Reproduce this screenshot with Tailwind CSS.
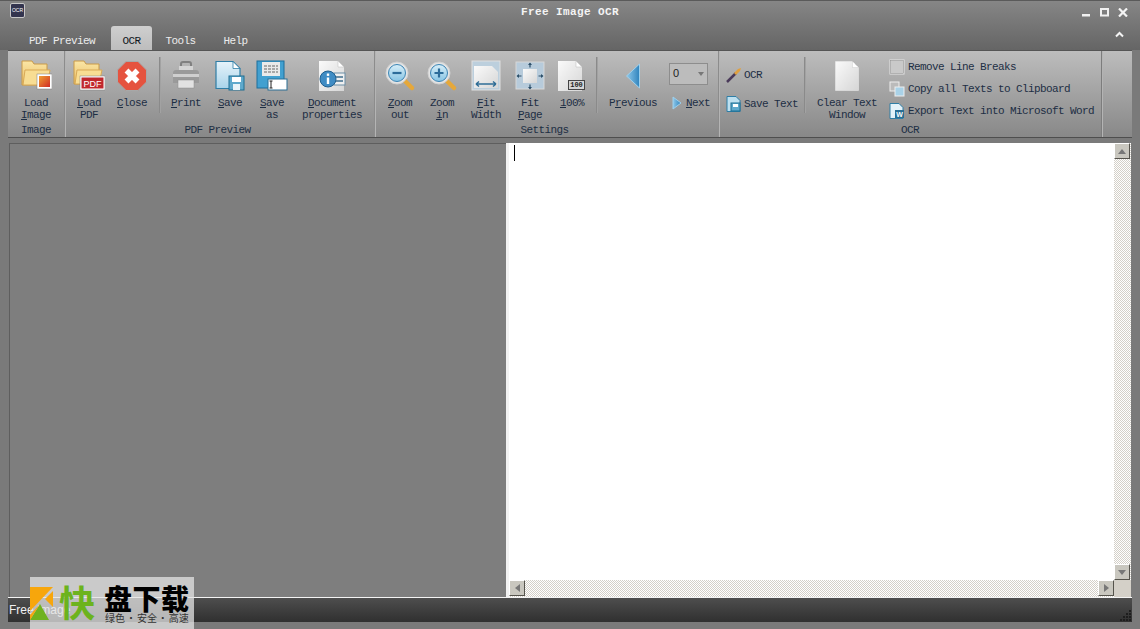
<!DOCTYPE html>
<html>
<head>
<meta charset="utf-8">
<script src="https://cdn.jsdelivr.net/npm/@tailwindcss/browser@4"></script>
</head>
<body class="m-0 overflow-hidden">
<svg class="absolute w-0 h-0">
  <defs>
    <linearGradient id="folder" x1="0" y1="0" x2="0" y2="1"><stop offset="0" stop-color="#fbe6a6"/><stop offset="1" stop-color="#e9bd62"/></linearGradient>
    <linearGradient id="page" x1="0" y1="0" x2="1" y2="1"><stop offset="0" stop-color="#fafafa"/><stop offset="1" stop-color="#d6d6d6"/></linearGradient>
    <linearGradient id="bluepage" x1="0" y1="0" x2="0" y2="1"><stop offset="0" stop-color="#e6f3fa"/><stop offset="1" stop-color="#a9d4ea"/></linearGradient>
    <linearGradient id="lens" x1="0" y1="0" x2="0" y2="1"><stop offset="0" stop-color="#d8eef8"/><stop offset="1" stop-color="#86c4e4"/></linearGradient>
    <linearGradient id="tri" x1="0" y1="0" x2="1" y2="0"><stop offset="0" stop-color="#8ec8ea"/><stop offset="1" stop-color="#2f83bd"/></linearGradient>
    <linearGradient id="orangered" x1="0" y1="0" x2="1" y2="1"><stop offset="0" stop-color="#f0a030"/><stop offset="1" stop-color="#cf2a25"/></linearGradient>
  </defs>
</svg>

<div class="relative w-[1140px] h-[629px] flex flex-col overflow-hidden bg-[#7a7a7a] font-['Liberation_Mono',monospace] text-[11px] leading-[12px] tracking-[-0.6px]">
  <!-- title + tabs -->
  <div class="h-[50px] shrink-0 flex flex-col bg-gradient-to-b from-[#868686] to-[#656565] border-t border-[#5a5a5a]">
    <div class="h-[25px] shrink-0 flex items-start relative">
      <div class="ml-[10px] mt-[2px] w-[15px] h-[15px] rounded-[2px] bg-[#33344e] border border-[#c8c8c8] flex items-center justify-center text-[5px] leading-[5px] tracking-[0px] text-white font-['Liberation_Sans',sans-serif]">OCR</div>
      <div class="flex-1 text-center pt-[5px] pl-[33px] font-bold text-[#f4f4f4] tracking-[0.4px]">Free Image OCR</div>
      <div class="flex items-start gap-[9px] pt-[7px] pr-[12px]">
        <svg width="9" height="9" viewBox="0 0 9 9"><rect x="0" y="6" width="8" height="2.5" fill="#f0f0f0"/></svg>
        <svg width="9" height="9" viewBox="0 0 9 9"><rect x="1" y="1" width="7" height="6.5" fill="none" stroke="#f0f0f0" stroke-width="2"/></svg>
        <svg width="10" height="9" viewBox="0 0 10 9"><path d="M1 0.5 L9 8.5 M9 0.5 L1 8.5" stroke="#f4f4f4" stroke-width="2.2"/></svg>
      </div>
    </div>
    <div class="h-[24px] flex items-end pl-[8px] relative text-[#ececec]">
      <div class="w-[103px] h-[24px] pl-[21px] pt-[9px]">PDF Preview</div>
      <div class="w-[41px] h-[24px] rounded-t-[3px] bg-gradient-to-b from-[#cfcfcf] to-[#bdbdbd] text-[#101820] text-center pt-[9px]">OCR</div>
      <div class="w-[57px] h-[24px] text-center pt-[9px]">Tools</div>
      <div class="w-[57px] h-[24px] -ml-[2px] text-center pt-[9px]">Help</div>
      <svg class="absolute right-[16px] top-[5px]" width="9" height="7" viewBox="0 0 9 7"><path d="M1 5.5 L4.5 2 L8 5.5" fill="none" stroke="#f4f4f4" stroke-width="2"/></svg>
    </div>
  </div>

  <!-- ribbon -->
  <div class="ml-[8px] mr-[8px] h-[88px] shrink-0 flex bg-gradient-to-b from-[#bdbdbd] to-[#888888] border-t border-[#555] border-b border-b-[#4e4e4e] text-[#1d2e44]">
    <!-- Image -->
    <div class="w-[57px] shrink-0 flex flex-col border-r border-[#8c8c8c] shadow-[1px_0_0_#b4b4b4]">
      <div class="h-[73px] flex">
        <div class="w-full flex flex-col items-center pt-[9px]">
          <svg width="32" height="32" viewBox="0 2 32 32">
            <path d="M2 3 h10 l2 3 h13 v21 h-25 z" fill="url(#folder)" stroke="#c99a48"/>
            <path d="M3 27 l2 -15 h25 l-3 15 z" fill="#f8dd93" stroke="#d8a957"/>
            <rect x="17" y="16" width="15" height="15" fill="#fff" stroke="#7d7d7d" stroke-width=".5"/>
            <rect x="19" y="18" width="11" height="11" fill="url(#orangered)"/>
          </svg>
          <div class="mt-[5px] text-center">Load<br><span class="underline">I</span>mage</div>
        </div>
      </div>
      <div class="h-[12px] text-center">Image</div>
    </div>
    <!-- PDF Preview -->
    <div class="w-[310px] shrink-0 flex flex-col border-r border-[#8c8c8c] shadow-[1px_0_0_#b4b4b4]">
      <div class="h-[73px] flex pl-[3px]">
        <div class="w-[42px] flex flex-col items-center pt-[9px]">
          <svg width="32" height="32" viewBox="0 2 32 32">
            <path d="M1 3 h10 l2 3 h13 v20 h-25 z" fill="url(#folder)" stroke="#c99a48"/>
            <path d="M2 26 l2 -14 h25 l-3 14 z" fill="#f8dd93" stroke="#d8a957"/>
            <rect x="7" y="18" width="25" height="14" fill="#fff" stroke="#7d7d7d" stroke-width=".5"/>
            <rect x="8.500" y="19.500" width="22" height="11" fill="#c0272d"/>
            <text x="19.500" y="28.500" text-anchor="middle" font-family="Liberation Sans" font-size="9" letter-spacing="0" fill="#fff">PDF</text>
          </svg>
          <div class="mt-[5px] text-center"><span class="underline">L</span>oad<br>PDF</div>
        </div>
        <div class="w-[44px] flex flex-col items-center pt-[9px]">
          <svg width="32" height="32" viewBox="0 0 32 32">
            <path d="M10 1.500 h12 l8.500 8.500 v12 l-8.500 8.500 h-12 l-8.500 -8.500 v-12 z" fill="#e5533f" stroke="#a8a8a8"/>
            <path d="M10.500 10.500 L21.500 21.500 M21.500 10.500 L10.500 21.500" stroke="#fff" stroke-width="5.500"/>
          </svg>
          <div class="mt-[5px] text-center"><span class="underline">C</span>lose</div>
        </div>
        <div class="w-[11px] flex justify-center pt-[6px]"><div class="w-[2px] h-[56px] bg-[#a2a2a2] border-l border-[#8a8a8a]"></div></div>
        <div class="w-[42px] flex flex-col items-center pt-[9px]">
          <svg width="32" height="32" viewBox="0 0 32 32">
            <path d="M11 10 v-6 q0 -2 2 -2 h6 q2 0 2 2 v6" fill="none" stroke="#808080" stroke-width="2"/>
            <rect x="9" y="6" width="14" height="6" fill="#d4d4d4"/>
            <path d="M3 13 q0 -3 3 -3 h20 q3 0 3 3 v10 h-26 z" fill="#9a9a9a"/>
            <rect x="3" y="14" width="26" height="3" fill="#cfcfcf"/>
            <rect x="8" y="20" width="16" height="8" fill="#e2e2e2" stroke="#8c8c8c" stroke-width=".5"/>
          </svg>
          <div class="mt-[5px] text-center"><span class="underline">P</span>rint</div>
        </div>
        <div class="w-[46px] flex flex-col items-center pt-[9px]">
          <svg width="32" height="32" viewBox="0 0 32 32">
            <path d="M2 1.500 h17 l7 7 v20 h-24 z" fill="url(#bluepage)" stroke="#2f7ea6" stroke-width="1.200"/>
            <path d="M19 1.500 v7 h7 z" fill="#fff" stroke="#2f7ea6" stroke-width=".8"/>
            <rect x="15" y="16" width="15" height="14" fill="#5fa9cc" stroke="#1f6e92"/>
            <rect x="18" y="17" width="9" height="5" fill="#fff"/>
            <rect x="19" y="24" width="7" height="6" fill="#e8f3f8"/>
          </svg>
          <div class="mt-[5px] text-center"><span class="underline">S</span>ave</div>
        </div>
        <div class="w-[38px] flex flex-col items-center pt-[9px]">
          <svg width="32" height="32" viewBox="0 0 32 32">
            <rect x="1" y="1" width="27" height="27" fill="#42a0d0" stroke="#1c6f9c"/>
            <rect x="6" y="2" width="18" height="14" fill="#eaeaea"/>
            <path d="M8 6 h14 M8 9 h14 M8 12 h14" stroke="#666" stroke-dasharray="3 1"/>
            <rect x="12" y="19" width="19" height="11" fill="#fff" stroke="#2a6f95"/>
            <path d="M15 21 v7 M13.500 21 h3 M13.500 28 h3" stroke="#222" fill="none"/>
          </svg>
          <div class="mt-[5px] text-center"><span class="underline">S</span>ave<br>as</div>
        </div>
        <div class="w-[82px] flex flex-col items-center pt-[9px]">
          <svg width="32" height="32" viewBox="0 0 32 32">
            <path d="M3 1 h19 l6 6 v24 h-25 z" fill="url(#page)"/>
            <path d="M22 1 v6 h6 z" fill="#fff" stroke="#bbb" stroke-width=".5"/>
            <rect x="18" y="13" width="11" height="12" fill="#f0f0f0" stroke="#6a8ea6"/>
            <path d="M20 17 h7 M20 21 h7" stroke="#6a8ea6" stroke-width="2"/>
            <circle cx="12" cy="19" r="8" fill="#3f8cc4" stroke="#1f5f8f"/>
            <rect x="10.800" y="17.500" width="2.400" height="6.500" fill="#fff"/><rect x="10.800" y="13.500" width="2.400" height="2.400" fill="#fff"/>
          </svg>
          <div class="mt-[5px] text-center"><span class="underline">D</span>ocument<br>properties</div>
        </div>
      </div>
      <div class="h-[12px] text-center pr-[4px]">PDF Preview</div>
    </div>
    <!-- Settings -->
    <div class="w-[344px] shrink-0 flex flex-col border-r border-[#8c8c8c] shadow-[1px_0_0_#b4b4b4]">
      <div class="h-[73px] flex pl-[4px]">
        <div class="w-[42px] flex flex-col items-center pt-[9px]">
          <svg width="32" height="32" viewBox="0 0 32 32">
            <path d="M20 20 L28 28" stroke="#e6a83a" stroke-width="4.500" stroke-linecap="round"/>
            <circle cx="13" cy="13" r="11" fill="#e4e4e4" stroke="#d0d0d0"/>
            <circle cx="13" cy="13" r="8.500" fill="url(#lens)" stroke="#3b85b5"/>
            <path d="M8.500 13 h9" stroke="#2c6c9a" stroke-width="2.200"/>
          </svg>
          <div class="mt-[5px] text-center"><span class="underline">Z</span>oom<br>out</div>
        </div>
        <div class="w-[42px] flex flex-col items-center pt-[9px]">
          <svg width="32" height="32" viewBox="0 0 32 32">
            <path d="M20 20 L28 28" stroke="#e6a83a" stroke-width="4.500" stroke-linecap="round"/>
            <circle cx="13" cy="13" r="11" fill="#e4e4e4" stroke="#d0d0d0"/>
            <circle cx="13" cy="13" r="8.500" fill="url(#lens)" stroke="#3b85b5"/>
            <path d="M8.500 13 h9 M13 8.500 v9" stroke="#2c6c9a" stroke-width="2.200"/>
          </svg>
          <div class="mt-[5px] text-center">Zoom<br><span class="underline">i</span>n</div>
        </div>
        <div class="w-[46px] flex flex-col items-center pt-[9px]">
          <svg width="32" height="32" viewBox="0 0 32 32">
            <rect x="2" y="1" width="28" height="29" fill="#bccfdd" stroke="#e0e0e0"/>
            <path d="M4 6 h18 l6 6 v16 h-24 z" fill="url(#page)"/>
            <path d="M6 24 h20 M6 24 l3 -2.500 M6 24 l3 2.500 M26 24 l-3 -2.500 M26 24 l-3 2.500" stroke="#2f6d96" stroke-width="1.500" fill="none"/>
          </svg>
          <div class="mt-[5px] text-center"><span class="underline">F</span>it<br>Width</div>
        </div>
        <div class="w-[42px] flex flex-col items-center pt-[9px]">
          <svg width="32" height="32" viewBox="0 0 32 32">
            <rect x="2" y="2" width="28" height="27" fill="#b7cbdb" stroke="#d8d8d8"/>
            <rect x="9" y="9" width="14" height="14" fill="url(#page)"/>
            <path d="M16 3.500 v4 M16 24.500 v4 M3.500 16 h4 M24.500 16 h4" stroke="#2c4f69" stroke-width="1.200"/>
            <path d="M14 5 h4 l-2 -2.500 z M14 27 h4 l-2 2.500 z M5 14 v4 l-2.500 -2 z M27 14 v4 l2.500 -2 z" fill="#2c4f69"/>
          </svg>
          <div class="mt-[5px] text-center">Fit<br><span class="underline">P</span>age</div>
        </div>
        <div class="w-[42px] flex flex-col items-center pt-[9px]">
          <div class="relative w-[32px] h-[32px] shrink-0">
            <svg width="32" height="32" viewBox="0 0 32 32">
              <path d="M2 1 h18 l6 6 v24 h-24 z" fill="url(#page)"/>
              <path d="M20 1 v6 h6 z" fill="#fff" stroke="#bbb" stroke-width=".5"/>
            </svg>
            <div class="absolute left-[12px] top-[20px] w-[17px] h-[10px] border border-[#444] bg-[#d4d4d4] text-[7px] leading-[8px] tracking-[0px] text-center text-[#222] font-bold">100</div>
          </div>
          <div class="mt-[5px] text-center"><span class="underline">1</span>00%</div>
        </div>
        <div class="w-[8px] flex justify-center pt-[6px]"><div class="w-[2px] h-[56px] bg-[#a2a2a2] border-l border-[#8a8a8a]"></div></div>
        <div class="w-[64px] flex flex-col items-center pt-[9px]">
          <svg width="32" height="32" viewBox="0 0 32 32"><path d="M22.500 4 L9.500 16 L22.500 28 z" fill="url(#tri)" stroke="#9fd0ec"/></svg>
          <div class="mt-[5px] text-center">P<span class="underline">r</span>evious</div>
        </div>
        <div class="w-[50px] flex flex-col pt-[12px] pl-[4px]">
          <div class="relative w-[39px] h-[22px] border border-[#8d8d8d] bg-[#bcbcbc] text-[#222] font-['Liberation_Sans',sans-serif] text-[11px] tracking-[0px] pl-[3px] pt-[3px]">0
            <svg class="absolute right-[3px] top-[8px]" width="6" height="4" viewBox="0 0 6 4"><path d="M0 0 h6 l-3 4 z" fill="#777"/></svg>
          </div>
          <div class="flex items-center mt-[11px] ml-[3px]">
            <svg width="10" height="14" viewBox="0 0 10 14"><path d="M1 1 L9 7 L1 13 z" fill="url(#tri)" stroke="#9fd0ec"/></svg>
            <span class="ml-[4px]"><span class="underline">N</span>ext</span>
          </div>
        </div>
      </div>
      <div class="h-[12px] text-center pr-[4px]">Settings</div>
    </div>
    <!-- OCR -->
    <div class="w-[383px] shrink-0 flex flex-col border-r border-[#7d7d7d] shadow-[1px_0_0_#b4b4b4]">
      <div class="h-[73px] flex">
        <div class="w-[82px] flex flex-col pl-[7px] pt-[16px] gap-[13px]">
          <div class="flex items-center h-[16px]">
            <svg width="16" height="16" viewBox="0 0 16 16"><path d="M1 15 L10 6" stroke="#4a3a5a" stroke-width="2.500"/><path d="M8 6 L12 2 L15 1 L14 4 L10 8 z" fill="#e0a040"/></svg>
            <span class="ml-[2px]">OCR</span>
          </div>
          <div class="flex items-center h-[16px]">
            <svg width="16" height="16" viewBox="0 0 16 16"><path d="M1 .5 h9 l4 4 v11 h-13 z" fill="#bde0f0" stroke="#2f7ea6"/><rect x="5" y="7" width="9" height="8" fill="#5fa9cc" stroke="#1f6e92"/><rect x="7" y="8" width="5" height="3" fill="#fff"/></svg>
            <span class="ml-[2px]">Save Text</span>
          </div>
        </div>
        <div class="w-[8px] flex justify-center pt-[6px]"><div class="w-[2px] h-[56px] bg-[#a2a2a2] border-l border-[#8a8a8a]"></div></div>
        <div class="w-[76px] flex flex-col items-center pt-[9px]">
          <svg width="32" height="32" viewBox="0 0 32 32">
            <path d="M4.500 1.500 h17 l6 6 v23 h-23 z" fill="url(#page)" stroke="#eee" stroke-width=".5"/>
            <path d="M21.500 1.500 v6 h6 z" fill="#fff" stroke="#aaa" stroke-width=".5" stroke-dasharray="1 1"/>
          </svg>
          <div class="mt-[5px] text-center">Clear Text<br>Window</div>
        </div>
        <div class="flex flex-col pl-[4px] pt-[8px] gap-[6px]">
          <div class="flex items-center h-[16px]">
            <svg width="16" height="16" viewBox="0 0 16 16"><rect x="1" y="1" width="14" height="14" fill="#c9c9c9" stroke="#e6e6e6"/><rect x="1.500" y="1.500" width="13" height="13" fill="none" stroke="#8a8a8a" stroke-width=".5"/></svg>
            <span class="ml-[3px]">Remove Line Breaks</span>
          </div>
          <div class="flex items-center h-[16px]">
            <svg width="16" height="16" viewBox="0 0 16 16"><rect x="1" y="1" width="9" height="9" fill="#bbb" stroke="#eee"/><rect x="6" y="6" width="9" height="9" fill="#a9d2e8" stroke="#eee"/></svg>
            <span class="ml-[3px]">Copy all Texts to Clipboard</span>
          </div>
          <div class="flex items-center h-[16px]">
            <svg width="16" height="16" viewBox="0 0 16 16"><path d="M1 .5 h9 l4 4 v11 h-13 z" fill="#e4f2f9" stroke="#2f7ea6"/><rect x="6" y="7" width="9" height="8" fill="#2a6f95"/><text x="10.500" y="14" text-anchor="middle" font-family="Liberation Sans" font-weight="700" font-size="7" letter-spacing="0" fill="#fff">W</text></svg>
            <span class="ml-[3px]">Export Text into Microsoft Word</span>
          </div>
        </div>
      </div>
      <div class="h-[12px] text-center">OCR</div>
    </div>
    <div class="flex-1"></div>
  </div>

  <!-- panes -->
  <div class="mt-[5px] ml-[9px] mr-[9px] flex-1 flex min-h-0 font-['Liberation_Sans',sans-serif]">
    <div class="w-[497px] shrink-0 bg-[#7e7e7e] border-t border-l border-[#5e5e5e]"></div>
    <div class="w-[3px] shrink-0 bg-[#f2f2f2]"></div>
    <div class="flex-1 flex flex-col min-w-0">
      <div class="flex-1 flex min-h-0">
        <div class="flex-1 bg-white pl-[5px] pt-[2px]"><div class="w-[1px] h-[16px] bg-black"></div></div>
        <div class="w-[17px] shrink-0 flex flex-col justify-between bg-[repeating-conic-gradient(#d4d0c8_0_25%,#ffffff_0_50%)] bg-size-[2px_2px]">
          <div class="w-[16px] h-[16px] bg-[#c9c7bf] border-r border-b border-[#55534c] border-t-white border-l-white border-t border-l flex items-center justify-center"><svg width="8" height="5" viewBox="0 0 8 5"><path d="M0 5 L4 0 L8 5 z" fill="#777"/></svg></div>
          <div class="w-[16px] h-[16px] bg-[#c9c7bf] border-r border-b border-[#55534c] border-t-white border-l-white border-t border-l flex items-center justify-center"><svg width="8" height="5" viewBox="0 0 8 5"><path d="M0 0 L4 5 L8 0 z" fill="#777"/></svg></div>
        </div>
      </div>
      <div class="h-[17px] shrink-0 flex">
        <div class="flex-1 flex justify-between bg-[repeating-conic-gradient(#d4d0c8_0_25%,#ffffff_0_50%)] bg-size-[2px_2px]">
          <div class="w-[16px] h-[16px] bg-[#c9c7bf] border-r border-b border-[#55534c] border-t-white border-l-white border-t border-l flex items-center justify-center"><svg width="5" height="8" viewBox="0 0 5 8"><path d="M5 0 L0 4 L5 8 z" fill="#777"/></svg></div>
          <div class="w-[16px] h-[16px] bg-[#c9c7bf] border-r border-b border-[#55534c] border-t-white border-l-white border-t border-l flex items-center justify-center"><svg width="5" height="8" viewBox="0 0 5 8"><path d="M0 0 L5 4 L0 8 z" fill="#777"/></svg></div>
        </div>
        <div class="w-[17px] shrink-0 bg-[#d4d0c8]"></div>
      </div>
    </div>
  </div>

  <!-- status bar -->
  <div class="mx-[8px] mb-[7px] h-[25px] shrink-0 relative border-t border-[#f4f4f4] bg-gradient-to-b from-[#4e4e4e] to-[#303030] font-['Liberation_Sans',sans-serif] text-[12px] tracking-[0px] leading-[24px] text-[#f0f0f0] pl-[1px]">
    Free Image
    <svg class="absolute right-0 bottom-[1px]" width="12" height="12" viewBox="0 0 12 12" fill="#1e1e1e"><rect x="9" y="1" width="2" height="2"/><rect x="6" y="4" width="2" height="2"/><rect x="9" y="4" width="2" height="2"/><rect x="3" y="7" width="2" height="2"/><rect x="6" y="7" width="2" height="2"/><rect x="9" y="7" width="2" height="2"/><rect x="0" y="10" width="2" height="2"/><rect x="3" y="10" width="2" height="2"/><rect x="6" y="10" width="2" height="2"/><rect x="9" y="10" width="2" height="2"/></svg>
  </div>

  <!-- watermark overlay -->
  <div class="absolute left-[30px] top-[577px] w-[164px] h-[52px] bg-[#e4e4e4]/75 tracking-[0px] font-['Noto_Sans_CJK_SC',sans-serif]">
    <svg class="absolute left-0 top-[10px]" width="24" height="34" viewBox="0 0 24 34">
      <path d="M0 0 H23 L0 24 z" fill="#f7a60c"/>
      <path d="M0 33 H19 L10 17 z" fill="#6fb21f"/>
      <path d="M23 4 V20 L15 12 z" fill="#f7a60c"/>
      <path d="M0 28 L10 17 L0 33 z" fill="#f7a60c"/>
    </svg>
    <div class="absolute left-[29px] top-[2px] text-[36px] leading-[44px] font-bold text-[#6cb31d]">快</div>
    <div class="absolute left-[74px] top-[7px] text-[28px] leading-[28px] font-black text-black whitespace-nowrap tracking-[0.5px]">盘下载</div>
    <div class="absolute left-[75px] top-[35px] text-[10px] leading-[12px] text-[#333] whitespace-nowrap [word-spacing:-1.3px]">绿色 · 安全 · 高速</div>
  </div>
</div>
</body>
</html>
